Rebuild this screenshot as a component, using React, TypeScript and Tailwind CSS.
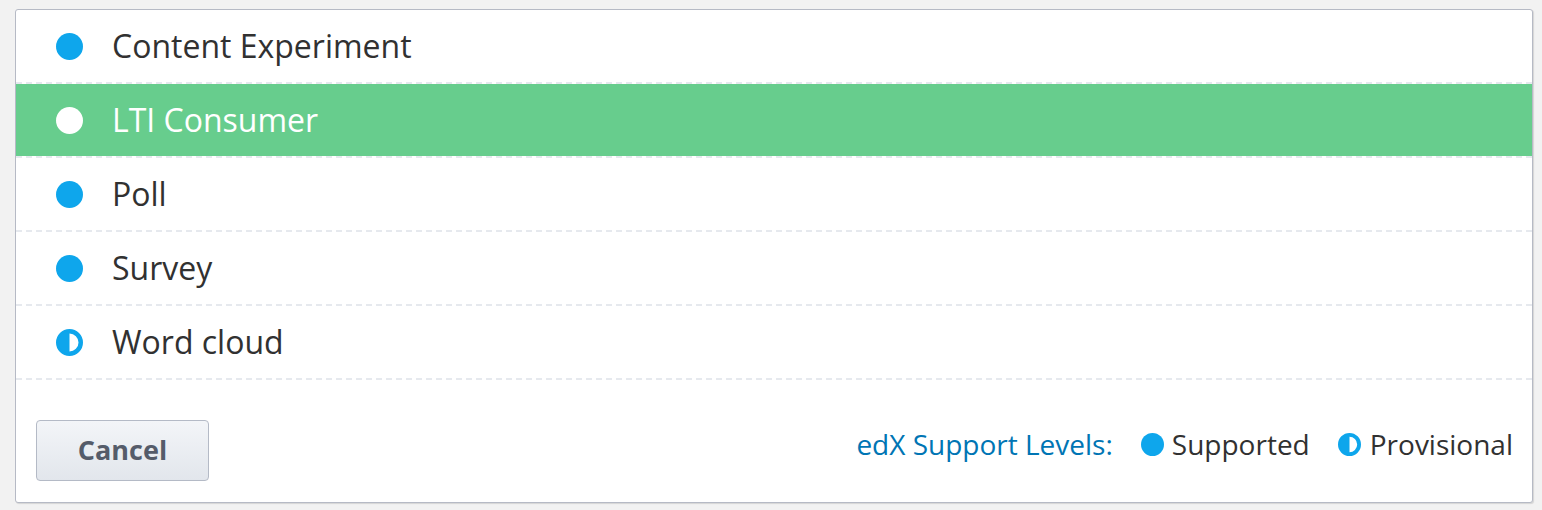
import React from "react";

type Level = "supported" | "provisional";

interface Item {
  label: string;
  level: Level;
  selected?: boolean;
}

const items: Item[] = [
  { label: "Content Experiment", level: "supported" },
  { label: "LTI Consumer", level: "supported", selected: true },
  { label: "Poll", level: "supported" },
  { label: "Survey", level: "supported" },
  { label: "Word cloud", level: "provisional" },
];

function LevelIcon({ level, size, white }: { level: Level; size: number; white?: boolean }) {
  const color = white ? "#ffffff" : "#0ea6ec";
  if (level === "supported") {
    return (
      <svg width={size} height={size} viewBox="0 0 24 24" className="shrink-0">
        <circle cx="12" cy="12" r="12" fill={color} />
      </svg>
    );
  }
  return (
    <svg width={size} height={size} viewBox="0 0 24 24" className="shrink-0">
      <circle cx="12" cy="12" r="10" fill="none" stroke={color} strokeWidth="4" />
      <path d="M12 2 A10 10 0 0 0 12 22 Z" fill={color} />
    </svg>
  );
}

export default function App() {
  return (
    <div
      className="min-h-[510px] w-full bg-[#f2f2f2] pl-[15px] pr-[9px] pt-[9px] pb-[7px]"
      style={{ fontFamily: '"Open Sans", "Noto Sans", sans-serif' }}
    >
      <div className="rounded-[3px] border border-[#b6bac5] bg-white shadow-[1px_1px_1px_rgba(0,0,0,0.12)]">
        {/* Component list */}
        <ul>
          {items.map((item) => (
            <li
              key={item.label}
              className={
                item.selected
                  ? "flex h-[74px] items-center gap-[30px] border-b-2 border-dashed border-[#e6e9ee] bg-[#67cd8d] bg-clip-padding pl-[40px] text-white"
                  : "flex h-[74px] items-center gap-[30px] border-b-2 border-dashed border-[#e6e9ee] pl-[40px] text-[#313131]"
              }
            >
              <LevelIcon level={item.level} size={27} white={item.selected} />
              <span className="-ml-px text-[32px] leading-none">{item.label}</span>
            </li>
          ))}
        </ul>

        {/* Footer */}
        <div className="flex items-start justify-between pl-[20px] pr-[19px] pt-[40px] pb-[21px]">
          <button className="flex h-[61px] w-[173px] items-center justify-center rounded-[4px] border border-[#b4bac6] bg-gradient-to-b from-[#f3f5f8] to-[#e2e6ec] text-[27px] font-bold text-[#555c6a]">
            Cancel
          </button>
          <div className="mt-[3px] flex items-center text-[28px] leading-[42px]">
            <span className="mr-[28px] text-[#0075b4]">edX Support Levels:</span>
            <LevelIcon level="supported" size={23} />
            <span className="ml-[8px] mr-[28px] text-[#313131]">Supported</span>
            <LevelIcon level="provisional" size={23} />
            <span className="ml-[9px] text-[#313131]">Provisional</span>
          </div>
        </div>
      </div>
    </div>
  );
}
